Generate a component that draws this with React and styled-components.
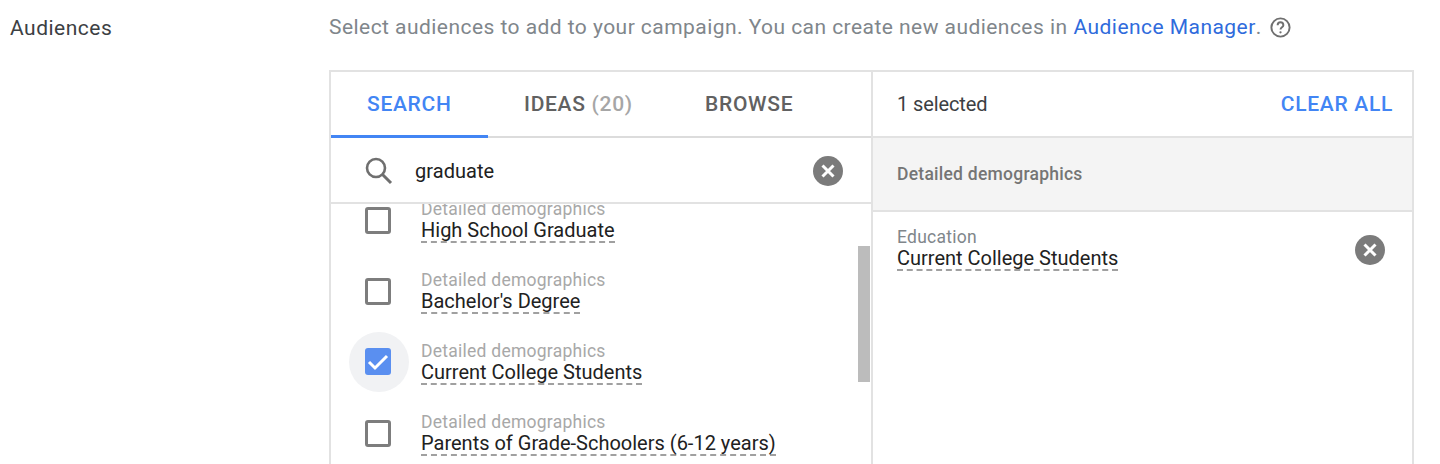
import React from 'react';
import styled, { createGlobalStyle } from 'styled-components';

const blue = '#4285f4';
const line = '#e2e2e2';

const GlobalStyle = createGlobalStyle`
  html, body {
    margin: 0;
    height: 464px;
    overflow: hidden;
    background: #fff;
  }
  body {
    font-family: Roboto, "Liberation Sans", sans-serif;
  }
`;

const Page = styled.div`
  display: grid;
  grid-template-columns: 329px 1085px;
  height: 464px;
  overflow: hidden;
`;

const Label = styled.div`
  padding: 15px 0 0 10px;
  font-size: 21px;
  line-height: 26px;
  letter-spacing: 0.5px;
  color: #3c4043;
`;

const Intro = styled.div`
  display: flex;
  align-items: center;
  height: 54px;
  font-size: 21px;
  letter-spacing: 0.45px;
  color: #80868b;
`;

const IntroLink = styled.a`
  margin-left: 6px;
  color: #2f6bdc;
`;

const Help = styled.svg`
  width: 23px;
  height: 23px;
  margin-left: 7px;
  color: #6f6f6f;
`;

const Panel = styled.div`
  display: grid;
  grid-template-columns: 540px 1fr;
  margin-top: 16px;
  height: 400px;
  border: 2px solid ${line};
  border-bottom: 0;
  box-sizing: border-box;
`;

const LeftColumn = styled.div`
  display: flex;
  flex-direction: column;
  min-width: 0;
`;

const RightColumn = styled.div`
  display: flex;
  flex-direction: column;
  border-left: 2px solid ${line};
`;

const Tabs = styled.div`
  display: flex;
  height: 66px;
  box-sizing: border-box;
  border-bottom: 2px solid #dcdcdc;
`;

const Tab = styled.div`
  box-sizing: border-box;
  height: 66px;
  width: ${(p) => p.$width}px;
  padding-left: ${(p) => p.$pad}px;
  line-height: 65px;
  font-size: 21px;
  font-weight: 500;
  letter-spacing: 0.7px;
  color: ${(p) => (p.$active ? blue : '#616161')};
  border-bottom: ${(p) => (p.$active ? `3px solid ${blue}` : '0')};
`;

const Count = styled.span`
  color: #a6a6a6;
`;

const SearchRow = styled.div`
  display: flex;
  align-items: center;
  height: 66px;
  box-sizing: border-box;
  border-bottom: 2px solid ${line};
  padding: 2px 28px 0 31px;
`;

const SearchIcon = styled.svg`
  width: 32px;
  height: 32px;
  flex: none;
`;

const SearchText = styled.div`
  flex: 1;
  margin-left: 21px;
  font-size: 20px;
  letter-spacing: 0.05px;
  color: #212121;
`;

const ClearIcon = styled.svg`
  display: block;
  width: 30px;
  height: 30px;
  flex: none;
`;

const ListArea = styled.div`
  position: relative;
  flex: 1;
  overflow: hidden;
`;

const List = styled.div`
  margin-top: -8px;
`;

const Row = styled.div`
  display: flex;
  align-items: flex-start;
  height: 71px;
  padding-left: 32px;
`;

const CheckWrap = styled.div`
  position: relative;
  flex: none;
  width: 30px;
  height: 30px;
  margin: 9px 28px 0 0;
  display: flex;
  align-items: center;
  justify-content: center;
`;

const Halo = styled.div`
  position: absolute;
  left: -14px;
  top: -15px;
  width: 60px;
  height: 60px;
  border-radius: 50%;
  background: #f1f2f4;
`;

const CheckBox = styled.div`
  position: relative;
  box-sizing: border-box;
  width: 26px;
  height: 27px;
  margin-top: ${(p) => (p.$checked ? '-2px' : '0')};
  border-radius: 3px;
  border: ${(p) => (p.$checked ? '0' : '3px solid #7d7d7d')};
  background: ${(p) => (p.$checked ? '#5a8ff0' : '#fff')};
`;

const CheckMark = styled.svg`
  display: block;
  width: 26px;
  height: 27px;
`;

const RowText = styled.div`
  display: flex;
  flex-direction: column;
  align-items: flex-start;
`;

const Category = styled.div`
  height: 21px;
  margin-top: 3px;
  font-size: 17.5px;
  line-height: 21px;
  letter-spacing: 0.25px;
  color: ${(p) => (p.$dark ? '#80868b' : '#a8a8a8')};
`;

const Name = styled.div`
  font-size: 20px;
  line-height: 21px;
  color: #212121;
  border-bottom: 2px dashed #a0a0a0;
`;

const Scrollbar = styled.div`
  position: absolute;
  right: 1px;
  top: 42px;
  width: 12px;
  height: 136px;
  background: #bcbcbc;
`;

const SelectedHeader = styled.div`
  display: flex;
  align-items: center;
  justify-content: space-between;
  height: 66px;
  box-sizing: border-box;
  border-bottom: 2px solid ${line};
  padding: 0 19px 0 24px;
  font-size: 20px;
  letter-spacing: -0.1px;
  color: #3c4043;
`;

const ClearAll = styled.div`
  font-size: 21px;
  font-weight: 500;
  letter-spacing: 0.7px;
  color: ${blue};
`;

const GroupHeader = styled.div`
  display: flex;
  align-items: center;
  height: 74px;
  box-sizing: border-box;
  padding-left: 24px;
  background: #f4f4f4;
  border-bottom: 2px solid ${line};
  font-size: 17.5px;
  font-weight: 500;
  letter-spacing: 0.25px;
  color: #757575;
`;

const SelectedRow = styled.div`
  display: flex;
  justify-content: space-between;
  padding: 12px 27px 0 24px;
`;

const RemoveWrap = styled.div`
  margin-top: 11px;
`;

const Clear = () => (
  <ClearIcon viewBox="0 0 30 30">
    <circle cx="15" cy="15" r="15" fill="#7b7b7b" />
    <path d="M9.5 9.5l11 11M20.5 9.5l-11 11" stroke="#fff" strokeWidth="3" fill="none" />
  </ClearIcon>
);

const items = [
  { name: 'High School Graduate' },
  { name: "Bachelor's Degree" },
  { name: 'Current College Students', checked: true },
  { name: 'Parents of Grade-Schoolers (6-12 years)' },
];

const App = () => (
  <Page>
    <GlobalStyle />
    <Label>Audiences</Label>
    <div>
      <Intro>
        Select audiences to add to your campaign. You can create new audiences in
        <IntroLink>Audience Manager</IntroLink>.
        <Help viewBox="0 0 24 24" fill="none">
          <circle cx="12" cy="12" r="9.5" stroke="currentColor" strokeWidth="2" />
          <path
            d="M9 9.6a3 3 0 0 1 6 0c0 2-3 2.2-3 4.4"
            stroke="currentColor"
            strokeWidth="2"
          />
          <circle cx="12" cy="17" r="1.2" fill="currentColor" />
        </Help>
      </Intro>
      <Panel>
        <LeftColumn>
          <Tabs>
            <Tab $active $width={157} $pad={36}>
              SEARCH
            </Tab>
            <Tab $width={181} $pad={36}>
              IDEAS <Count>(20)</Count>
            </Tab>
            <Tab $width={200} $pad={36}>
              BROWSE
            </Tab>
          </Tabs>
          <SearchRow>
            <SearchIcon viewBox="0 0 32 32" fill="none">
              <circle cx="14" cy="13" r="9" stroke="#6f6f6f" strokeWidth="2.6" />
              <path d="M20.5 19.5l8.5 8.5" stroke="#6f6f6f" strokeWidth="3" />
            </SearchIcon>
            <SearchText>graduate</SearchText>
            <Clear />
          </SearchRow>
          <ListArea>
            <List>
              {items.map((item) => (
                <Row key={item.name}>
                  <CheckWrap>
                    {item.checked && <Halo />}
                    <CheckBox $checked={item.checked}>
                      {item.checked && (
                        <CheckMark viewBox="0 0 26 27" fill="none">
                          <path d="M4 14l6 6L22 8" stroke="#fff" strokeWidth="3" />
                        </CheckMark>
                      )}
                    </CheckBox>
                  </CheckWrap>
                  <RowText>
                    <Category>Detailed demographics</Category>
                    <Name>{item.name}</Name>
                  </RowText>
                </Row>
              ))}
            </List>
            <Scrollbar />
          </ListArea>
        </LeftColumn>
        <RightColumn>
          <SelectedHeader>
            <span>1 selected</span>
            <ClearAll>CLEAR ALL</ClearAll>
          </SelectedHeader>
          <GroupHeader>Detailed demographics</GroupHeader>
          <SelectedRow>
            <RowText>
              <Category $dark>Education</Category>
              <Name>Current College Students</Name>
            </RowText>
            <RemoveWrap>
              <Clear />
            </RemoveWrap>
          </SelectedRow>
        </RightColumn>
      </Panel>
    </div>
  </Page>
);

export default App;
